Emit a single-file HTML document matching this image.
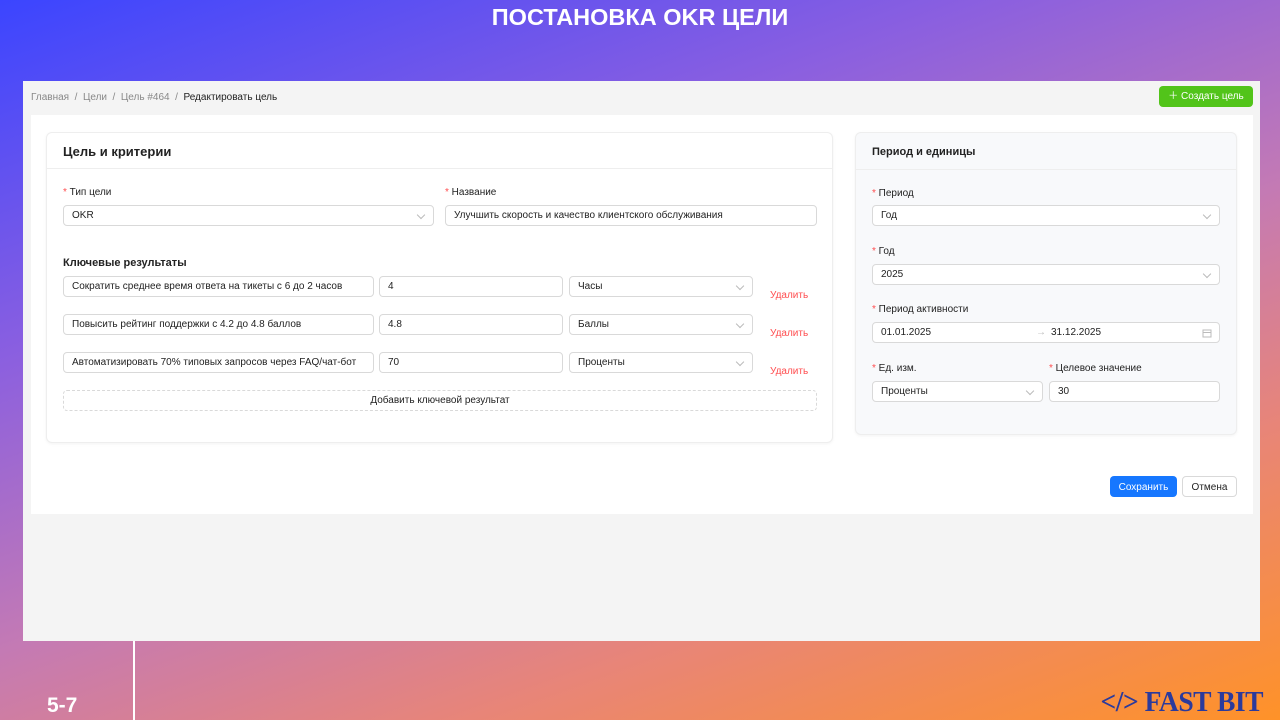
<!DOCTYPE html>
<html><head><meta charset="utf-8"><style>
*{box-sizing:border-box;margin:0;padding:0}
body{width:1280px;height:720px;overflow:hidden;position:relative;font-family:"Liberation Sans","Noto Sans CJK SC",sans-serif;
background:linear-gradient(160deg,#3b45ff 0%,#8a5fe0 30%,#c47ab4 55%,#e88578 75%,#ff9228 100%);}
.a{position:absolute}
.screen{left:23px;top:81px;width:1237px;height:560px;background:#f4f4f4}
.white{left:31px;top:115px;width:1222px;height:399px;background:#fff}
.card{border:1px solid #eee;border-radius:6px;background:#fff;box-shadow:0 1px 3px rgba(0,0,0,.05)}
.t{font-size:10px;color:#222;white-space:nowrap}
.lbl{font-size:10px;color:#222;white-space:nowrap}
.lbl:before{content:"* ";color:#ff4d4f}
.in{height:21px;border:1px solid #d9d9d9;border-radius:4px;background:#fff;font-size:10px;color:#222;padding:0 8px;line-height:20px;white-space:nowrap}
.sel:after{content:"";position:absolute;right:9px;top:6px;width:5px;height:5px;border-right:1px solid #bbb;border-bottom:1px solid #bbb;transform:rotate(45deg)}
.del{font-size:10px;color:#ff4d4f}
</style></head><body>
<div class="a" style="left:0;top:4px;width:1280px;text-align:center;color:#fff;font-weight:bold;font-size:23.5px">ПОСТАНОВКА OKR ЦЕЛИ</div>
<div class="a screen"></div>
<div class="a t" style="left:31px;top:92px;color:#888">Главная &nbsp;/&nbsp; Цели &nbsp;/&nbsp; Цель #464 &nbsp;/&nbsp; <span style="color:#222">Редактировать цель</span></div>
<div class="a" style="left:1159px;top:86px;width:94px;height:21px;background:#52c41a;border-radius:4px;color:#fff;font-size:10px;line-height:22px;text-align:center">＋ Создать цель</div>
<div class="a white"></div>

<div class="a card" style="left:46px;top:132px;width:787px;height:311px"></div>
<div class="a" style="left:46px;top:168px;width:787px;border-top:1px solid #eee"></div>
<div class="a" style="left:63px;top:144px;font-size:13px;font-weight:bold;color:#222">Цель и критерии</div>
<div class="a lbl" style="left:63px;top:187px">Тип цели</div>
<div class="a in sel" style="left:63px;top:205px;width:371px">OKR</div>
<div class="a lbl" style="left:445px;top:187px">Название</div>
<div class="a in" style="left:445px;top:205px;width:372px">Улучшить скорость и качество клиентского обслуживания</div>
<div class="a" style="left:63px;top:257px;font-size:11px;font-weight:bold;color:#222">Ключевые результаты</div>

<div class="a in" style="left:63px;top:276px;width:311px">Сократить среднее время ответа на тикеты с 6 до 2 часов</div>
<div class="a in" style="left:379px;top:276px;width:184px">4</div>
<div class="a in sel" style="left:569px;top:276px;width:184px">Часы</div>
<div class="a del" style="left:770px;top:290px">Удалить</div>

<div class="a in" style="left:63px;top:314px;width:311px">Повысить рейтинг поддержки с 4.2 до 4.8 баллов</div>
<div class="a in" style="left:379px;top:314px;width:184px">4.8</div>
<div class="a in sel" style="left:569px;top:314px;width:184px">Баллы</div>
<div class="a del" style="left:770px;top:328px">Удалить</div>

<div class="a in" style="left:63px;top:352px;width:311px">Автоматизировать 70% типовых запросов через FAQ/чат-бот</div>
<div class="a in" style="left:379px;top:352px;width:184px">70</div>
<div class="a in sel" style="left:569px;top:352px;width:184px">Проценты</div>
<div class="a del" style="left:770px;top:366px">Удалить</div>

<div class="a in" style="left:63px;top:390px;width:754px;border-style:dashed;text-align:center">Добавить ключевой результат</div>

<div class="a card" style="left:855px;top:132px;width:382px;height:303px;background:#f8f9fb"></div>
<div class="a" style="left:855px;top:169px;width:382px;border-top:1px solid #eee"></div>
<div class="a" style="left:872px;top:146px;font-size:11px;font-weight:bold;color:#222">Период и единицы</div>
<div class="a lbl" style="left:872px;top:188px">Период</div>
<div class="a in sel" style="left:872px;top:205px;width:348px">Год</div>
<div class="a lbl" style="left:872px;top:246px">Год</div>
<div class="a in sel" style="left:872px;top:264px;width:348px">2025</div>
<div class="a lbl" style="left:872px;top:304px">Период активности</div>
<div class="a in" style="left:872px;top:322px;width:348px">01.01.2025<span style="position:absolute;left:163px;color:#bbb">→</span><span style="position:absolute;left:178px">31.12.2025</span>
<svg style="position:absolute;right:7px;top:5px" width="10" height="10" viewBox="0 0 10 10"><rect x="1" y="2" width="8" height="7" fill="none" stroke="#bbb"/><line x1="1" y1="4.5" x2="9" y2="4.5" stroke="#bbb"/></svg></div>
<div class="a lbl" style="left:872px;top:363px">Ед. изм.</div>
<div class="a in sel" style="left:872px;top:381px;width:171px">Проценты</div>
<div class="a lbl" style="left:1049px;top:363px">Целевое значение</div>
<div class="a in" style="left:1049px;top:381px;width:171px">30</div>

<div class="a" style="left:1110px;top:476px;width:67px;height:21px;background:#1677ff;border-radius:4px;color:#fff;font-size:10px;line-height:23px;text-align:center">Сохранить</div>
<div class="a" style="left:1182px;top:476px;width:55px;height:21px;background:#fff;border:1px solid #d9d9d9;border-radius:4px;color:#222;font-size:10px;line-height:21px;text-align:center">Отмена</div>

<div class="a" style="left:133px;top:641px;width:2px;height:79px;background:#fff"></div>
<div class="a" style="left:47px;top:694px;color:#fff;font-weight:bold;font-size:21px">5-7</div>
<div class="a" style="right:17px;top:686px;color:#2b3a9c;font-family:'Liberation Serif',serif;font-weight:bold;font-size:29px;letter-spacing:-0.5px;transform:scaleX(0.95);transform-origin:right">&lt;/&gt; FAST BIT</div>
</body></html>
